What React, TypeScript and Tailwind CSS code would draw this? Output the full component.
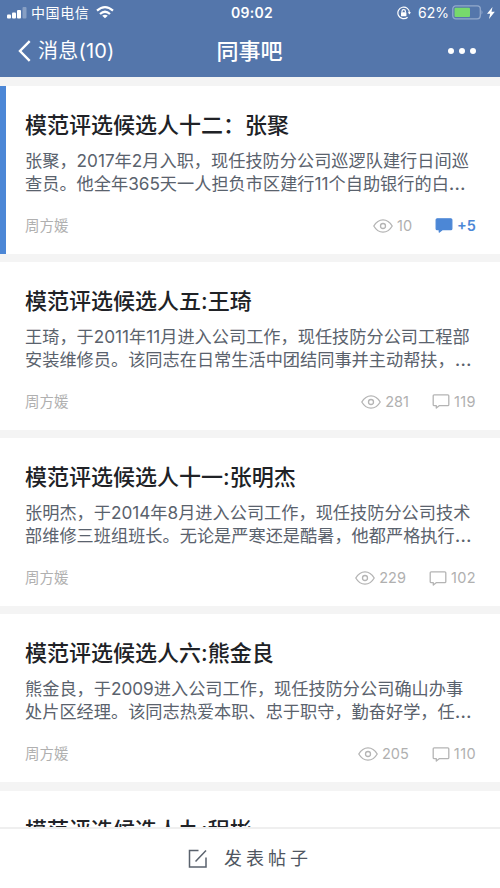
import clsx from 'clsx';

type Post = {
  title: string;
  lines?: string[];
  author?: string;
  views?: number;
  comments?: string;
  unread?: boolean;
};

const posts: Post[] = [
  {
    title: '模范评选候选人十二：张聚',
    lines: ['张聚，2017年2月入职，现任技防分公司巡逻队建行日间巡', '查员。他全年365天一人担负市区建行11个自助银行的白'],
    author: '周方媛',
    views: 10,
    comments: '+5',
    unread: true,
  },
  {
    title: '模范评选候选人五:王琦',
    lines: ['王琦，于2011年11月进入公司工作，现任技防分公司工程部', '安装维修员。该同志在日常生活中团结同事并主动帮扶，'],
    author: '周方媛',
    views: 281,
    comments: '119',
  },
  {
    title: '模范评选候选人十一:张明杰',
    lines: ['张明杰，于2014年8月进入公司工作，现任技防分公司技术', '部维修三班组班长。无论是严寒还是酷暑，他都严格执行'],
    author: '周方媛',
    views: 229,
    comments: '102',
  },
  {
    title: '模范评选候选人六:熊金良',
    lines: ['熊金良，于2009进入公司工作，现任技防分公司确山办事', '处片区经理。该同志热爱本职、忠于职守，勤奋好学，任'],
    author: '周方媛',
    views: 205,
    comments: '110',
  },
  { title: '模范评选候选人九:程彬' },
];

function EyeIcon() {
  return (
    <svg width="20" height="14" viewBox="0 0 20 14" fill="none" stroke="#b4b4b4" strokeWidth="1.3">
      <path d="M.8 7C3 3.200 6.200 .8 10 .8S17 3.200 19.200 7C17 10.800 13.800 13.200 10 13.200S3 10.800 .8 7Z" />
      <circle cx="10" cy="7" r="2.500" />
    </svg>
  );
}

function CommentIcon({ filled }: { filled?: boolean }) {
  return (
    <svg width="18" height="15" viewBox="0 0 18 15" fill={filled ? '#4c87d6' : 'none'} stroke={filled ? '#4c87d6' : '#b4b4b4'} strokeWidth="1.3" strokeLinejoin="round">
      <path d="M2.200 .8H15.800Q16.800 .8 16.800 1.800V10.700Q16.800 11.700 15.800 11.700H7.200L4.300 14V11.700H2.200Q1.200 11.700 1.200 10.700V1.800Q1.200 .8 2.200 .8Z" />
    </svg>
  );
}

function StatusBar() {
  return (
    <div className="flex h-[25px] items-center justify-between pr-[5px] pl-[7px] text-[14px]">
      <div className="flex flex-1 items-center">
        <svg width="20" height="12" viewBox="0 0 20 12" fill="#fff">
          <rect x="0" y="7.500" width="4" height="4" rx="1" />
          <rect x="5" y="5.500" width="4" height="6" rx="1" />
          <rect x="10" y="3" width="4" height="8.500" rx="1" />
          <rect x="15.500" y="0" width="4" height="11.500" rx="1" opacity=".3" />
        </svg>
        <span className="ml-1 text-[14px] tracking-[0.6px]">中国电信</span>
        <svg className="ml-[7px]" width="18" height="13" viewBox="0 0 18 13" fill="none" stroke="#fff" strokeWidth="2.200">
          <path d="M1 4.700Q9-2.300 17 4.700" />
          <path d="M4 8Q9 3.500 14 8" />
          <path d="M9 12.300L6.200 9.700Q9 7.700 11.800 9.700Z" fill="#fff" stroke="none" />
        </svg>
      </div>
      <span className="pl-[2px] text-[14px] font-semibold tracking-[0.3px]">09:02</span>
      <div className="flex flex-1 items-center justify-end">
        <svg width="14" height="14" viewBox="0 0 14 14" fill="none" stroke="#fff" strokeWidth="1.200">
          <path d="M12.500 7A5.800 5.800 0 1 0 10.600 11.200" />
          <path d="M10.800 6.300H14L12.400 8.600Z" fill="#fff" stroke="none" />
          <rect x="4" y="6.200" width="5.400" height="4" rx=".5" fill="#fff" stroke="none" />
          <path d="M5 6.500V5.300A1.700 1.700 0 0 1 8.400 5.300V6.500" />
        </svg>
        <span className="ml-[7px] text-[14px]">62%</span>
        <svg className="ml-[3px]" width="32" height="15" viewBox="0 0 32 15">
          <rect x=".8" y=".8" width="27.500" height="13" rx="3" fill="none" stroke="#93a9cc" strokeWidth="1.300" />
          <rect x="2.500" y="2.700" width="15.500" height="9.200" rx="1" fill="#77d96c" />
          <path d="M29.500 5Q31.500 7.300 29.500 9.800Z" fill="#93a9cc" />
        </svg>
        <svg className="ml-[3px]" width="8" height="12" viewBox="0 0 8 12" fill="#fff">
          <path d="M5.500 0L0 6.800H3.200L2 12L7.800 4.800H4.500Z" />
        </svg>
      </div>
    </div>
  );
}

function NavBar() {
  return (
    <div className="flex h-[52px] items-center pr-[24px] pl-[18px]">
      <div className="flex flex-1 items-center">
        <svg width="13" height="22" viewBox="0 0 13 22" fill="none" stroke="#fff" strokeWidth="2.400">
          <path d="M11.700 1.200L2 11L11.700 20.800" />
        </svg>
        <span className="ml-[7px] text-[20px] tracking-[0.2px]">消息(10)</span>
      </div>
      <h1 className="pl-[5px] text-[22px] font-medium">同事吧</h1>
      <div className="flex flex-1 justify-end gap-[4.500px]">
        <span className="size-[6.500px] rounded-full bg-white" />
        <span className="size-[6.500px] rounded-full bg-white" />
        <span className="size-[6.500px] rounded-full bg-white" />
      </div>
    </div>
  );
}

function PostCard({ post }: { post: Post }) {
  return (
    <article className={clsx('h-[168px] shrink-0 border-l-[6px] bg-white pr-[24px] pl-[19px]', post.unread ? 'border-[#4c87d6]' : 'border-white')}>
      <h2 className="pt-[23px] text-[22px] leading-[32px] font-medium whitespace-nowrap text-[#202226]">{post.title}</h2>
      {post.lines && (
        <>
          <div className="mt-[8px] h-[46px] text-[17.200px] leading-[23px] whitespace-nowrap text-[#5a626d]">
            <p>{post.lines[0]}</p>
            <p className="h-[23px]">
              {post.lines[1]}
              <span className="text-[19.500px] leading-none">…</span>
            </p>
          </div>
          <div className="mt-[21px] flex h-[20px] items-center text-[14.500px] text-[#b0b0b0]">
            <span className="flex-1">{post.author}</span>
            <EyeIcon />
            <span className="ml-[4px]">{post.views}</span>
            <span className={clsx('ml-[23px] flex items-center gap-[4px]', post.unread ? 'font-semibold text-[#4c87d6]' : 'tracking-[0.4px]')}>
              <CommentIcon filled={post.unread} />
              {post.comments}
            </span>
          </div>
        </>
      )}
    </article>
  );
}

export default function App() {
  return (
    <div className="flex h-[888px] w-[500px] flex-col overflow-hidden bg-[#f4f4f4] font-['Inter','Noto_Sans_CJK_SC',sans-serif]">
      <header className="h-[77px] shrink-0 bg-[#5476ab] text-white">
        <StatusBar />
        <NavBar />
      </header>
      <main className="flex min-h-0 flex-1 flex-col gap-[8.250px] overflow-hidden pt-[8.500px]">
        {posts.map((post) => (
          <PostCard key={post.title} post={post} />
        ))}
      </main>
      <footer className="flex h-[61px] shrink-0 items-center justify-center gap-[16px] border-t-2 border-[#efefef] bg-white text-[#4f5661]">
        <svg width="20" height="20" viewBox="0 0 20 20" fill="none" stroke="#5a626d" strokeWidth="1.500">
          <path d="M10.500 1.500H1.500V18H18V8.500" />
          <path d="M7.500 12.500L18 1.500" />
        </svg>
        <span className="text-[18px] tracking-[4px]">发表帖子</span>
      </footer>
    </div>
  );
}
